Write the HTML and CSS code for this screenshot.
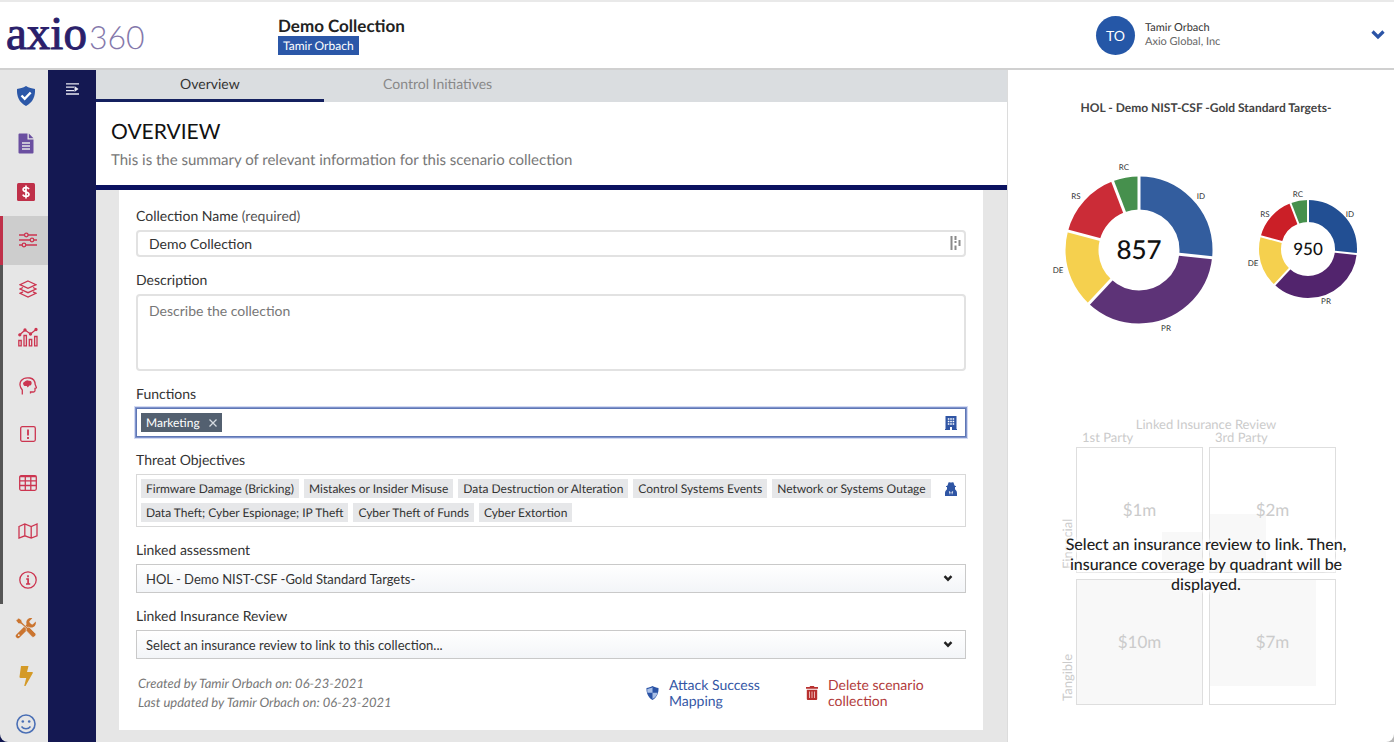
FILE: index.html
```html
<!DOCTYPE html>
<html lang="en">
<head>
    <meta charset="UTF-8">
    <meta name="viewport" content="width=device-width, initial-scale=1.0">
    <title>Axio360 - Demo Collection</title>
    <link rel="stylesheet" href="styles.css">
</head>
<body>
    <header class="topbar">
        <a href="#" class="logo"><span class="logo-name">axio</span><span class="logo-num">360</span></a>
        <div class="heading">
            <h1>Demo Collection</h1>
            <span class="owner">Tamir Orbach</span>
        </div>
        <div class="user">
            <span class="avatar">TO</span>
            <div class="user-text">
                <div class="user-name">Tamir Orbach</div>
                <div class="user-org">Axio Global, Inc</div>
            </div>
            <button class="user-toggle" aria-label="Account menu">
                <svg width="14" height="10" viewBox="0 0 14 10"><path d="M1.500 1.500L7 7l5.500-5.500" fill="none" stroke="#2b54a6" stroke-width="3.200"/></svg>
            </button>
        </div>
    </header>

    <div class="layout">
        <!-- Icon sidebar -->
        <nav class="sidebar">
            <a href="#" class="item" aria-label="Assessments">
                <svg width="20" height="22" viewBox="0 0 20 22"><path d="M10 1c3 2 6 2.500 9 3 .5 7-2 13.500-9 17C3 17.500.5 11 1 4c3-.5 6-1 9-3z" fill="#2c58a8"/><path d="M5.500 10.500l3.200 3.300 6-6.300" fill="none" stroke="#fff" stroke-width="2.400"/></svg>
            </a>
            <a href="#" class="item" aria-label="Documents">
                <svg width="16" height="22" viewBox="0 0 16 22"><path d="M1.500.5H9.500v6h6v13a1 1 0 0 1-1 1h-13a1 1 0 0 1-1-1v-18a1 1 0 0 1 1-1z" fill="#6a4fa0"/><path d="M10.800.5l4.700 4.700h-4.700z" fill="#6a4fa0"/><path d="M4 10h8M4 13h8M4 16h8" stroke="#e6e6e6" stroke-width="1.400"/></svg>
            </a>
            <a href="#" class="item" aria-label="Quantification">
                <svg width="18" height="18" viewBox="0 0 18 18"><rect width="18" height="18" rx="1.500" fill="#bf3049"/><path d="M12 6.200C11.300 4.900 10.200 4.500 9 4.500c-1.700 0-2.900.8-2.900 2.100C6.100 9.700 12 8.200 12 11.300c0 1.400-1.300 2.200-3 2.200-1.500 0-2.700-.6-3.200-1.900M9 2.600v12.800" fill="none" stroke="#fff" stroke-width="1.700"/></svg>
            </a>
            <div class="subnav">
                <a href="#" class="item sub selected" aria-label="Scenario collections">
                    <svg class="line" width="18" height="16" viewBox="0 0 18 16"><path d="M0 3h5.500M9 3h9M0 8h11M15 8h3M0 13h3M7 13h11"/><circle cx="7.300" cy="3" r="1.800"/><circle cx="13" cy="8" r="1.800"/><circle cx="5" cy="13" r="1.800"/></svg>
                </a>
                <a href="#" class="item sub" aria-label="Layers">
                    <svg class="line" width="18" height="18" viewBox="0 0 18 18"><path d="M9 1l8 3.700-8 3.700-8-3.700zM4 7.500L1 9l8 3.700L17 9l-3-1.500M4 11.800l-3 1.500L9 17l8-3.700-3-1.500"/></svg>
                </a>
                <a href="#" class="item sub" aria-label="Analytics">
                    <svg class="line" width="20" height="20" viewBox="0 0 20 20"><path d="M1.500 8L7 3l5.500 4L18 2.500"/><circle cx="1.800" cy="7.800" r="1" fill="#cc3550"/><circle cx="7" cy="3" r="1" fill="#cc3550"/><circle cx="12.500" cy="7" r="1" fill="#cc3550"/><circle cx="18" cy="2.500" r="1" fill="#cc3550"/><path d="M.8 13.500h2.400v5.300H.8zM6 8.500h2.400v10.300H6zM11.300 12.500h2.400v6.300h-2.400zM16.600 9.500H19v9.300h-2.400z"/></svg>
                </a>
                <a href="#" class="item sub" aria-label="Insights">
                    <svg class="line" width="18" height="18" viewBox="0 0 18 18"><path d="M3.300 17.500v-4.500C.5 10 .3 6 2.300 3.500 4.300 1 8 .5 11 1c3.500.6 5 3.500 5.200 6.500l1.300 3.200-1.500.6v2.200c0 1-.6 1.500-1.500 1.500H11.500v1.500"/><path d="M5 7.500C4.300 6.500 5 5.300 6.200 5.200c.6-1.300 2.300-1.500 3.300-.8 1.400-.4 2.500.4 2.500 1.600 0 1.300-.8 1.900-1.800 1.900L8.800 9.500 8 8.200C6.500 8.700 5.600 8.300 5 7.500z" fill="#cc3550"/></svg>
                </a>
                <a href="#" class="item sub" aria-label="Alerts">
                    <svg class="line" width="16" height="16" viewBox="0 0 16 16"><rect x=".7" y=".7" width="14.600" height="14.600" rx="1.500"/><path d="M8 3.500v6M8 11v2" stroke-width="1.800"/></svg>
                </a>
                <a href="#" class="item sub" aria-label="Table">
                    <svg class="line" width="18" height="16" viewBox="0 0 18 16"><rect x=".7" y=".7" width="16.600" height="14.600" rx="1.500"/><path d="M.7 1.500h16.600M.7 5.800h16.600M.7 10.500h16.600M6.300 1v14.500M11.800 1v14.500"/></svg>
                </a>
                <a href="#" class="item sub" aria-label="Map">
                    <svg class="line" width="20" height="16" viewBox="0 0 20 16"><path d="M1 3.500L6.800 1l6.400 2.500L19 1v11.800L13.200 15l-6.400-2.200L1 15zM6.800 1v11.800M13.200 3.500V15"/></svg>
                </a>
                <a href="#" class="item sub" aria-label="Information">
                    <svg class="line" width="18" height="18" viewBox="0 0 18 18"><circle cx="9" cy="9" r="8.200"/><path d="M7.200 8h1.900v4.800M7 13h4.200M9 4.200v2" stroke-width="1.700"/></svg>
                </a>
            </div>
            <a href="#" class="item" aria-label="Tools">
                <svg width="22" height="22" viewBox="0 0 22 22"><path d="M3 19L14 8" stroke="#cb7530" stroke-width="4.500" stroke-linecap="round"/><path d="M20.700 4.600l-3 3-2.900-.5-.5-2.900 3-3C13.500.3 10.700 3 11.500 7l3.600 3.500c3.800.7 6.500-2.200 5.600-5.900z" fill="#cb7530"/><path d="M1 3.600L3.600 1l3 2 .6 2.400 5 5 2-.3 6.400 6.500c1.300 1.500-1.800 4.700-3.400 3.400l-6-6.300.2-2.100L6 7 3.200 6.500z" fill="#cb7530" stroke="#e6e6e6" stroke-width=".7"/><circle cx="3.800" cy="18.200" r=".9" fill="#e6e6e6"/></svg>
            </a>
            <a href="#" class="item" aria-label="Actions">
                <svg width="14" height="20" viewBox="0 0 14 20"><path d="M2 0h7.500L8 6h5c.7 0 1 .6.700 1.200L6.500 20H5.200l2-8H1.500C.8 12 .4 11.500.5 10.800z" fill="#d49a27"/></svg>
            </a>
            <a href="#" class="item" aria-label="Feedback">
                <svg width="20" height="20" viewBox="0 0 20 20"><circle cx="10" cy="10" r="9" fill="none" stroke="#4a6fb5" stroke-width="1.600"/><circle cx="6.800" cy="7.500" r="1.300" fill="#4a6fb5"/><circle cx="13.200" cy="7.500" r="1.300" fill="#4a6fb5"/><path d="M5.500 12.500c2.200 3 6.800 3 9 0" fill="none" stroke="#4a6fb5" stroke-width="1.500"/></svg>
            </a>
        </nav>

        <div class="rail">
            <button class="rail-toggle" aria-label="Expand menu">
                <svg width="13" height="12" viewBox="0 0 13 12"><path d="M0 .8h13M0 4.200h8M0 7.600h8M0 11h13" stroke="#e8e8f2" stroke-width="1.300"/><path d="M8.500 3l4 3-4 3z" fill="#e8e8f2"/></svg>
            </button>
        </div>

        <main class="main">
            <nav class="tabs">
                <a href="#" class="tab active">Overview</a>
                <a href="#" class="tab">Control Initiatives</a>
            </nav>
            <section class="intro">
                <h2>OVERVIEW</h2>
                <p>This is the summary of relevant information for this scenario collection</p>
            </section>

            <form class="card">
                <div class="field">
                    <label for="name">Collection Name <span class="hint">(required)</span></label>
                    <div class="wrap">
                        <input type="text" id="name" class="text" value="Demo Collection">
                        <svg class="input-icon" width="11" height="14" viewBox="0 0 11 14"><path d="M1.500 0v14M5.500 0v4M5.500 5v2M5.500 9.500V14M9.500 4v6" stroke="#8a8a8a" stroke-width="2"/></svg>
                    </div>
                </div>

                <div class="field">
                    <label for="description">Description</label>
                    <textarea id="description" class="text" placeholder="Describe the collection"></textarea>
                </div>

                <div class="field">
                    <label for="functions">Functions</label>
                    <div class="tagbox focused">
                        <div class="tags">
                            <span class="tag dark">Marketing <button type="button" aria-label="Remove Marketing"><svg width="8" height="8" viewBox="0 0 8 8"><path d="M.5.5l7 7M7.500.5l-7 7" stroke="#d5dae0" stroke-width="1.300"/></svg></button></span>
                            <input type="text" id="functions" class="tag-input">
                        </div>
                        <svg width="12" height="14" viewBox="0 0 12 14"><path d="M.5 0h11v13h.5v1H7v-3H5v3H0v-1h.5z" fill="#2f55a4"/><path d="M2.800 3h1.600M5.200 3h1.600M7.600 3h1.600M2.800 5.500h1.600M5.200 5.500h1.600M7.600 5.500h1.600M2.800 8h1.600M5.200 8h1.600M7.600 8h1.600" stroke="#fff" stroke-width="1.300"/></svg>
                    </div>
                </div>

                <div class="field">
                    <label id="threats">Threat Objectives</label>
                    <div class="tagbox" role="group" aria-labelledby="threats">
                        <div class="tags">
                            <span class="tag">Firmware Damage (Bricking)</span>
                            <span class="tag">Mistakes or Insider Misuse</span>
                            <span class="tag">Data Destruction or Alteration</span>
                            <span class="tag">Control Systems Events</span>
                            <span class="tag">Network or Systems Outage</span>
                            <span class="tag">Data Theft; Cyber Espionage; IP Theft</span>
                            <span class="tag">Cyber Theft of Funds</span>
                            <span class="tag">Cyber Extortion</span>
                        </div>
                        <svg width="12" height="14" viewBox="0 0 12 14"><path d="M3.500.5C4.500-.2 5.200.6 6 .6S7.500-.2 8.500.5L9.500 3.500l1.500.7v.8H10v2.200L11.300 8.700c.5.600.7 1.700.7 3V14H0v-2.300c0-1.300.2-2.400.7-3L2 7.200V5H1v-.8l1.500-.7z" fill="#2f55a4"/><path d="M3.800 9l1.700 1-.5 3zM8.200 9l-1.700 1 .5 3z" fill="#fff"/></svg>
                    </div>
                </div>

                <div class="field">
                    <label for="assessment">Linked assessment</label>
                    <div class="wrap">
                        <select id="assessment">
                            <option>HOL - Demo NIST-CSF -Gold Standard Targets-</option>
                        </select>
                        <svg class="caret" width="10" height="7" viewBox="0 0 10 7"><path d="M1.500 1.200L5 4.700l3.500-3.500" fill="none" stroke="#222" stroke-width="2.400"/></svg>
                    </div>
                </div>

                <div class="field">
                    <label for="insurance">Linked Insurance Review</label>
                    <div class="wrap">
                        <select id="insurance">
                            <option>Select an insurance review to link to this collection...</option>
                        </select>
                        <svg class="caret" width="10" height="7" viewBox="0 0 10 7"><path d="M1.500 1.200L5 4.700l3.500-3.500" fill="none" stroke="#222" stroke-width="2.400"/></svg>
                    </div>
                </div>

                <div class="card-footer">
                    <div class="meta">
                        <div>Created by Tamir Orbach on: 06-23-2021</div>
                        <div>Last updated by Tamir Orbach on: 06-23-2021</div>
                    </div>
                    <a href="#" class="action">
                        <svg width="13" height="14" viewBox="0 0 13 14"><path d="M6.500 0c2 1.300 4 1.700 6 2 .3 5-1.500 9.300-6 12C2 11.300.2 7 .5 2c2-.3 4-.7 6-2z" fill="#2b54a6"/><path d="M6.500 1.200v5.600H1.400C1.200 5.500 1.200 4.300 1.300 2.900c1.800-.3 3.500-.7 5.200-1.700zM6.500 6.800h5.100c-.6 2.600-2.200 4.600-5.100 6.300z" fill="#a9bfe6"/></svg>
                        <span>Attack Success Mapping</span>
                    </a>
                    <a href="#" class="action delete">
                        <svg width="12" height="14" viewBox="0 0 12 14"><path d="M0 1h3.500L4.200 0h3.600l.7 1H12v1.800H0zM.8 3.800h10.400V13a1 1 0 0 1-1 1H1.800a1 1 0 0 1-1-1z" fill="#b8302f"/><path d="M3.500 5.500v6.500M6 5.500v6.500M8.500 5.500v6.500" stroke="#eab5b3" stroke-width="1"/></svg>
                        <span>Delete scenario collection</span>
                    </a>
                </div>
            </form>
        </main>

        <aside class="panel">
            <h3>HOL - Demo NIST-CSF -Gold Standard Targets-</h3>
            <div class="charts">
                <svg class="donut" width="170" height="176" viewBox="-90 -90 170 176">
                    <g class="ring" transform="rotate(-90)">
                        <circle r="57" pathLength="360" stroke="#335d9e" stroke-dasharray="96 264"/>
                        <circle r="57" pathLength="360" stroke="#5d3377" stroke-dasharray="127 233" stroke-dashoffset="-96"/>
                        <circle r="57" pathLength="360" stroke="#f5d04e" stroke-dasharray="62 298" stroke-dashoffset="-223"/>
                        <circle r="57" pathLength="360" stroke="#cb2c37" stroke-dasharray="54 306" stroke-dashoffset="-285"/>
                        <circle r="57" pathLength="360" stroke="#46904d" stroke-dasharray="21 339" stroke-dashoffset="-339"/>
                    </g>
                    <g stroke="#fff" stroke-width="3">
                        <path d="M0-38v-38"/>
                        <path d="M0-38v-38" transform="rotate(96)"/>
                        <path d="M0-38v-38" transform="rotate(223)"/>
                        <path d="M0-38v-38" transform="rotate(285)"/>
                        <path d="M0-38v-38" transform="rotate(339)"/>
                    </g>
                    <text class="score" y="9">857</text>
                    <text class="key" x="-15" y="-80">RC</text>
                    <text class="key" x="62" y="-51">ID</text>
                    <text class="key" x="27" y="81">PR</text>
                    <text class="key" x="-81" y="23">DE</text>
                    <text class="key" x="-63" y="-51">RS</text>
                </svg>
                <svg class="donut small" width="120" height="126" viewBox="-62 -64 120 126">
                    <g class="ring" transform="rotate(-90)">
                        <circle r="38" pathLength="360" stroke="#224f93" stroke-dasharray="96 264"/>
                        <circle r="38" pathLength="360" stroke="#52246d" stroke-dasharray="127 233" stroke-dashoffset="-96"/>
                        <circle r="38" pathLength="360" stroke="#f5d04e" stroke-dasharray="62 298" stroke-dashoffset="-223"/>
                        <circle r="38" pathLength="360" stroke="#cb1f27" stroke-dasharray="54 306" stroke-dashoffset="-285"/>
                        <circle r="38" pathLength="360" stroke="#46904d" stroke-dasharray="21 339" stroke-dashoffset="-339"/>
                    </g>
                    <g stroke="#fff" stroke-width="2">
                        <path d="M0-25v-26"/>
                        <path d="M0-25v-26" transform="rotate(96)"/>
                        <path d="M0-25v-26" transform="rotate(223)"/>
                        <path d="M0-25v-26" transform="rotate(285)"/>
                        <path d="M0-25v-26" transform="rotate(339)"/>
                    </g>
                    <text class="score" y="6">950</text>
                    <text class="key" x="-10" y="-52">RC</text>
                    <text class="key" x="42" y="-32">ID</text>
                    <text class="key" x="18" y="55">PR</text>
                    <text class="key" x="-55" y="17">DE</text>
                    <text class="key" x="-43" y="-32">RS</text>
                </svg>
            </div>

            <div class="review">
                <div class="review-title">Linked Insurance Review</div>
                <div class="quadrants">
                    <div class="col">1st Party</div>
                    <div class="col">3rd Party</div>
                    <div class="row">Financial</div>
                    <div class="quad q1">$1m</div>
                    <div class="quad q2">$2m</div>
                    <div class="row">Tangible</div>
                    <div class="quad q3">$10m</div>
                    <div class="quad q4">$7m</div>
                </div>
                <p class="notice">Select an insurance review to link. Then, insurance coverage by quadrant will be displayed.</p>
            </div>
        </aside>
    </div>
</body>
</html>
```
FILE: styles.css
```css
/* General styles for body and layout */
* {
    box-sizing: border-box;
}

body {
    font-family: Lato, 'Open Sans', sans-serif;
    font-size: 14px;
    color: #333;
    background: linear-gradient(to right, #10164f 50%, #b5b5b5 50%);
    display: flex;
    flex-direction: column;
    height: 100vh;
    margin: 0;
    text-rendering: geometricPrecision;
}

h1, h2, h3, p {
    margin: 0;
}

a {
    text-decoration: none;
    color: inherit;
}

button {
    border: none;
    background: none;
    padding: 0;
    cursor: pointer;
}

svg {
    display: block;
    flex: none;
}

/* Top bar */
.topbar {
    display: flex;
    align-items: center;
    flex: none;
    height: 70px;
    background-color: white;
    border-top: 2px solid #e9e9e9;
    border-bottom: 2px solid #d0d0d0;
}

.logo {
    display: flex;
    align-items: baseline;
    gap: 2px;
    width: 278px;
    padding-left: 6px;
    line-height: 64px;
}

.logo-name {
    font-family: 'Liberation Serif', serif;
    font-size: 47px;
    color: #2b1f6b;
    -webkit-text-stroke: 1px #2b1f6b;
}

.logo-num {
    font-size: 32px;
    font-weight: 300;
    color: #8478ab;
}

.heading {
    display: flex;
    flex-direction: column;
    align-items: flex-start;
}

h1 {
    font-size: 17px;
    line-height: 21px;
    font-weight: bold;
    color: #222;
}

.owner {
    background-color: #2b57a8;
    color: white;
    font-size: 12px;
    line-height: 19px;
    padding: 0 5px;
}

.user {
    display: flex;
    align-items: center;
    width: 298px;
    margin-left: auto;
}

.avatar {
    width: 39px;
    height: 39px;
    border-radius: 50%;
    background-color: #2557a7;
    color: white;
    font-size: 14px;
    line-height: 39px;
    text-align: center;
}

.user-text {
    margin-left: 10px;
    font-size: 11px;
    line-height: 14px;
}

.user-org {
    color: #666;
}

.user-toggle {
    margin-left: auto;
    padding-right: 9px;
}

.layout {
    display: flex;
    flex: 1;
    min-height: 0;
}

/* Icon sidebar */
.sidebar {
    flex: none;
    width: 48px;
    padding-top: 2px;
    background-color: #e6e6e6;
    border-bottom-left-radius: 8px;
    overflow: hidden;
}

.item {
    display: flex;
    align-items: center;
    justify-content: center;
    min-height: 48px;
    padding-left: 3px;
}

.subnav {
    display: grid;
    grid-auto-rows: 1fr;
    min-height: 388px;
}

.sub {
    border-left: 3px solid #555;
    padding-left: 5px;
}

.sub.selected {
    background-color: #cdcdcd;
    border-left-color: #bf3049;
}

.line {
    fill: none;
    stroke: #cc3550;
    stroke-width: 1.3;
}

.rail {
    flex: none;
    width: 48px;
    background-color: #141852;
}

.rail-toggle {
    display: block;
    margin: 13px auto;
}

/* Main column */
.main {
    flex: 1;
    background-color: #e6e6e6;
    overflow: hidden;
}

.tabs {
    display: flex;
    background-color: #dadde0;
}

.tab {
    width: 25%;
    height: 32px;
    line-height: 28px;
    text-align: center;
    color: #888;
}

.tab.active {
    color: #333;
    border-bottom: 3px solid #14205f;
}

.intro {
    background-color: white;
    border-bottom: 5px solid #0b1260;
    padding: 15px;
    height: 88px;
}

h2 {
    font-size: 21px;
    line-height: 29px;
    font-weight: normal;
    color: #111;
}

.intro p {
    font-size: 15px;
    line-height: 29px;
    color: #777;
}

.card {
    background-color: white;
    margin: 0 24px 0 23px;
    padding: 16px 17px;
}

/* Form fields */
.field {
    margin-bottom: 13px;
}

label {
    display: block;
    line-height: 20px;
    margin-bottom: 4px;
}

.hint {
    color: #555;
}

.wrap {
    position: relative;
}

.text {
    display: block;
    width: 100%;
    height: 27px;
    border: 2px solid #e2e2e2;
    border-radius: 4px;
    padding: 0 11px;
    font: inherit;
    color: #333;
    background-color: white;
}

textarea.text {
    height: 77px;
    padding-top: 6px;
    resize: none;
}

.text::placeholder {
    color: #777;
}

.input-icon {
    position: absolute;
    right: 5px;
    top: 6px;
}

.tagbox {
    display: flex;
    justify-content: space-between;
    border: 1px solid #d8d8d8;
    padding: 4px 8px 4px 4px;
}

.tagbox > svg {
    margin-top: 3px;
}

.focused {
    border-color: #5f77b5;
    box-shadow: 0 0 0 1px #8094cc, 0 0 0 2px #d3daf3;
}

.tags {
    display: flex;
    flex-wrap: wrap;
    flex: 1;
    gap: 5px;
}

.tag {
    background-color: #e6e7e9;
    font-size: 12px;
    line-height: 19px;
    padding: 0 5px;
}

.tag.dark {
    display: flex;
    align-items: center;
    gap: 9px;
    background-color: #536070;
    color: white;
}

.tag-input {
    flex: 1;
    height: 19px;
    border: none;
    outline: none;
    font: inherit;
}

select {
    appearance: none;
    display: block;
    width: 100%;
    height: 29px;
    border: 1px solid #c9c9c9;
    border-radius: 0;
    padding: 0 9px;
    font: inherit;
    font-size: 13px;
    color: #333;
    background: linear-gradient(to bottom, #ffffff, #f3f5f8);
}

.caret {
    position: absolute;
    right: 13px;
    top: 11px;
    pointer-events: none;
}

/* Card footer */
.card-footer {
    display: flex;
    padding: 2px 0;
}

.meta {
    flex: 1;
    padding-left: 2px;
    font-size: 13px;
    font-style: italic;
    line-height: 19px;
    color: #777;
}

.action {
    display: flex;
    align-items: center;
    gap: 10px;
    width: 160px;
    line-height: 16px;
    color: #3457a5;
}

.action span {
    max-width: 100px;
}

.action.delete {
    color: #b23b3b;
}

/* Right panel */
.panel {
    flex: none;
    width: 387px;
    padding: 28px 39px 0 49px;
    background-color: white;
    border-left: 1px solid #dcdcdc;
    border-bottom-right-radius: 8px;
    overflow: hidden;
}

h3 {
    font-size: 12px;
    line-height: 20px;
    text-align: center;
    white-space: nowrap;
    color: #444;
}

.charts {
    display: flex;
    align-items: center;
    gap: 27px;
    margin: 42px -20px 0 -8px;
}

.ring {
    fill: none;
    stroke-width: 33;
}

.small .ring {
    stroke-width: 22;
}

.score {
    font-size: 26px;
    font-weight: 500;
    text-anchor: middle;
    fill: #111;
}

.small .score {
    font-size: 17px;
}

.key {
    font-size: 8px;
    text-anchor: middle;
    fill: #333;
}

/* Insurance quadrants */
.review {
    position: relative;
    margin-top: 81px;
    color: #cbcbcb;
}

.review-title {
    font-size: 13px;
    line-height: 14px;
    text-align: center;
}

.quadrants {
    display: grid;
    grid-template-columns: 16px 127px 127px;
    grid-template-rows: 16px 126px 126px;
    column-gap: 6px;
    margin-left: -3px;
}

.col {
    padding-left: 6px;
    font-size: 13px;
    line-height: 13px;
}

.col:first-child {
    grid-column: 2;
}

.row {
    writing-mode: vertical-rl;
    transform: rotate(180deg);
    margin: 0 -5px 0 5px;
    padding-top: 4px;
    font-size: 13px;
    line-height: 16px;
}

.quad {
    border: 1px solid #dedede;
    font-size: 17px;
    line-height: 124px;
    text-align: center;
    background-image: linear-gradient(#f8f8f8, #f8f8f8);
    background-repeat: no-repeat;
}

.q3, .q4, .row:nth-child(6) {
    margin-top: 6px;
    margin-bottom: -6px;
}

.q1 {
    background-position: right bottom;
    background-size: 40px 40px;
}

.q2 {
    background-position: left bottom;
    background-size: 56px 58px;
}

.q4 {
    background-position: left top;
    background-size: 106px 106px;
}

/* Message over the faded quadrants, white glow keeps it readable */
.notice {
    position: absolute;
    left: 0;
    right: 0;
    top: 118px;
    font-size: 16px;
    line-height: 20px;
    font-weight: 500;
    text-align: center;
    color: #222;
    text-shadow: 0 0 3px white, 0 0 3px white, 0 0 5px white, 0 0 5px white, 0 0 7px white, 0 0 7px white, 0 0 7px white, 0 0 7px white;
}
```
